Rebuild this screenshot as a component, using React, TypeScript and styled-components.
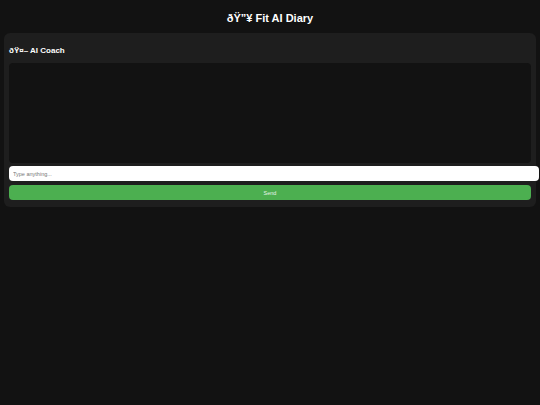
import styled, { createGlobalStyle } from "styled-components";

const GlobalStyle = createGlobalStyle`
  body {
    margin: 0;
    background: #121212;
    color: #ffffff;
    font-family: "Liberation Sans", Arial, sans-serif;
  }
`;

const Page = styled.div`
  padding: 0 4px;
`;

const Title = styled.h1`
  font-size: 11px;
  font-weight: bold;
  text-align: center;
  line-height: 14px;
  margin: 11px 0 8px;
`;

const Card = styled.section`
  background: #1e1e1e;
  border-radius: 6px;
  padding: 5px 5px 7px;
`;

const CardTitle = styled.h2`
  font-size: 8px;
  font-weight: bold;
  line-height: 11px;
  margin: 7px 0 7px;
`;

const ChatBox = styled.div`
  background: #121212;
  border-radius: 4px;
  height: 100px;
  margin-bottom: 3px;
`;

const Input = styled.input`
  display: block;
  width: 100%;
  height: 15px;
  padding: 0 4px;
  border: none;
  border-radius: 4px;
  background: #ffffff;
  font-family: "Liberation Sans", Arial, sans-serif;
  font-size: 5.5px;
  color: #222;
  outline: none;
  &::placeholder {
    color: #777;
  }
`;

const SendButton = styled.button`
  display: block;
  width: 100%;
  height: 15px;
  margin-top: 4px;
  border: none;
  border-radius: 4px;
  background: #4caf50;
  color: #e8f5e9;
  font-family: "Liberation Sans", Arial, sans-serif;
  font-size: 5.5px;
  cursor: pointer;
`;

function App() {
  return (
    <>
      <GlobalStyle />
      <Page>
        <Title>{"ðŸ”¥ Fit AI Diary"}</Title>
        <Card>
          <CardTitle>{"ðŸ¤– AI Coach"}</CardTitle>
          <ChatBox />
          <Input placeholder="Type anything..." />
          <SendButton>Send</SendButton>
        </Card>
      </Page>
    </>
  );
}

export default App;
